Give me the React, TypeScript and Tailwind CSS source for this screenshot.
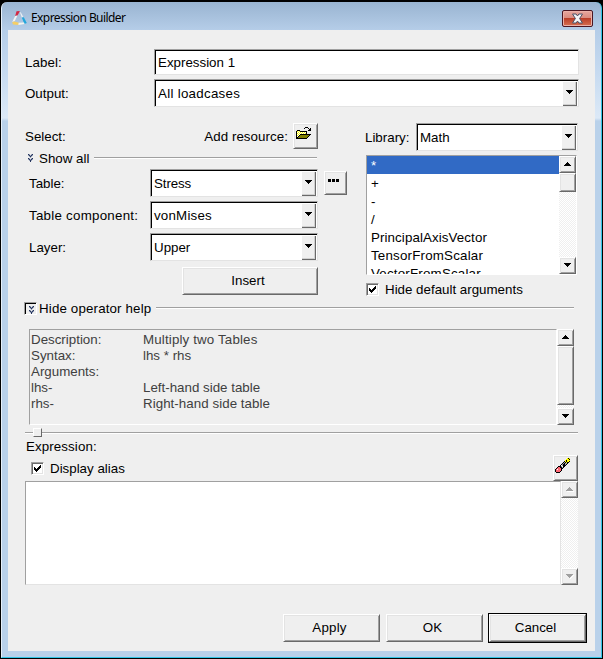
import React from 'react';
import clsx from 'clsx';

const RAISED =
  'bg-[#efefef] border border-t-white border-l-white border-b-[#696969] border-r-[#696969] shadow-[inset_1px_1px_0_#e3e3e3,inset_-1px_-1px_0_#a0a0a0]';
const SUNKEN =
  'bg-white border border-t-[#a0a0a0] border-l-[#a0a0a0] border-b-[#e3e3e3] border-r-[#e3e3e3] shadow-[inset_1px_1px_0_#000]';
const TRACK = 'bg-[repeating-conic-gradient(#fff_0_25%,#efefef_0_50%)] bg-[length:2px_2px]';

const COLORS: Record<string, string> = {
  K: '#000000',
  Y: '#ffff00',
  W: '#ffffff',
  O: '#808000',
  G: '#a0a0a0',
  P: '#ff6673',
  B: '#26355d',
  L: '#98a2b8',
};

const FOLDER = [
  '.........KKK...',
  '........K...K.K',
  '.............KK',
  '.KKK........KKK',
  'KYWYKKKKKKK....',
  'KWYWYWYWYWK....',
  'KYWYWYWYWYK....',
  'KWYWKKKKKKKKKKK',
  'KYWKOOOOOOOOOK.',
  'KWKOOOOOOOOOK..',
  'KKOOOOOOOOOK...',
  'KKKKKKKKKKK....',
];

const ERASER = [
  '............YKY',
  '...........YYYK',
  '..........YKYYY',
  '.........KYKYYK',
  '........KGKYKK.',
  '.......KGKGGK..',
  '......KGKKGK...',
  '.....KWGKKK....',
  '...KKKGWKK.....',
  '..KPPKKGK......',
  '.KPPPPKK.......',
  'KPWPPPK........',
  'KPPPPPK........',
  'KPPPPK.........',
  '.KKKK..........',
];

const CHEVRONS = ['BL.LB', 'LBLBL', '.LBL.', '..L..', 'BL.LB', 'LBLBL', '.LBL.', '..B..'];
const CHECK = ['......K', '.....KK', 'K...KKK', 'KK.KKK.', 'KKKKK..', '.KKK...', '..K....'];

const PixelIcon = ({ rows, className }: { rows: string[]; className?: string }) => {
  const w = rows[0].length;
  return (
    <svg width={w} height={rows.length} viewBox={`0 0 ${w} ${rows.length}`} shapeRendering="crispEdges" className={clsx('block shrink-0', className)}>
      {rows.flatMap((row, y) =>
        row.split('').map((c, x) => (COLORS[c] ? <rect key={`${x}-${y}`} x={x} y={y} width={1} height={1} fill={COLORS[c]} /> : null))
      )}
    </svg>
  );
};

const Arrow = ({ up, disabled }: { up?: boolean; disabled?: boolean }) => (
  <svg width="8" height="5" viewBox="0 0 8 5" shapeRendering="crispEdges" className="block">
    {disabled && <path d={up ? 'M1 5h7V4H1z' : 'M4 5h1V4h1V3h1V2h1V1H7v1H6v1H5v1H4z'} fill="#fff" />}
    <path d={up ? 'M3 0h1v1h1v1h1v1h1v1H0V3h1V2h1V1h1z' : 'M0 0h7v1H6v1H5v1H4v1H3V3H2V2H1V1H0z'} fill={disabled ? '#a0a0a0' : '#000'} />
  </svg>
);

const ScrollButton = ({ up, disabled }: { up?: boolean; disabled?: boolean }) => (
  <div className={clsx('w-[17px] h-[17px] shrink-0 flex items-center justify-center', RAISED)}>
    <Arrow up={up} disabled={disabled} />
  </div>
);

const Combo = ({ value, className, text }: { value: string; className?: string; text?: string }) => (
  <div className={clsx('h-7 flex p-px pl-[3px] shrink-0', SUNKEN, className)}>
    <span className={clsx('flex-1 leading-[25px]', text)}>{value}</span>
    <div className="w-[14px] h-6 mt-px bg-[#efefef] border-r border-b border-[#696969] shadow-[inset_-1px_-1px_0_#d0d0d0] flex justify-center pt-[8px] pl-px">
      <Arrow />
    </div>
  </div>
);

const Rule = ({ className }: { className?: string }) => <div className={clsx('h-[2px] bg-[#a0a0a0] border-b border-white', className)} />;

const Checkbox = () => (
  <div className="w-[13px] h-[13px] bg-white border border-t-[#a0a0a0] border-l-[#a0a0a0] border-b-white border-r-white shadow-[inset_1px_1px_0_#696969,inset_-1px_-1px_0_#e3e3e3] pt-[2px] pl-[2px] shrink-0">
    <PixelIcon rows={CHECK} />
  </div>
);

const Button = ({ children, className }: { children: React.ReactNode; className?: string }) => (
  <button className={clsx('h-7 block shrink-0', RAISED, className)}>{children}</button>
);

const operators = [
  { name: '*' },
  { name: '+' },
  { name: '-' },
  { name: '/' },
  { name: 'PrincipalAxisVector', text: 'tracking-[0.1px]' },
  { name: 'TensorFromScalar', text: 'tracking-[0.2px]' },
  { name: 'VectorFromScalar', text: 'tracking-[0.2px]' },
];

const help = [
  { label: 'Description:', value: 'Multiply two Tables', text: 'tracking-[0.15px]' },
  { label: 'Syntax:', value: 'lhs * rhs' },
  { label: 'Arguments:', value: '' },
  { label: 'lhs-', value: 'Left-hand side table' },
  { label: 'rhs-', value: 'Right-hand side table', text: 'tracking-[0.05px]' },
];

const fields = [
  { label: 'Table:', value: 'Stress', text: 'tracking-[-0.1px]' },
  { label: 'Table component:', value: 'vonMises', text: 'tracking-[0.2px]' },
  { label: 'Layer:', value: 'Upper' },
];

const TitleBar = () => (
  <div className="h-[28px] flex items-start pl-[10px] pr-[8px] shrink-0">
    <svg width="15" height="15" viewBox="0 0 15 15" className="mt-[9px] shrink-0">
      <path d="M4.5 0.3 L8 0 L5.5 4.5 L3.2 5 Z" fill="#d32742" />
      <path d="M3.2 5 L5.5 4.5 L2.8 10 L0.2 11 Z" fill="#f5f3f1" />
      <path d="M7.6 0.6 L9.2 2 L11.6 6.5 L9.8 6.5 Z" fill="#e9eef3" />
      <path d="M9.8 6.5 L11.8 6.2 L14.8 12 L12.4 13 Z" fill="#22a7dc" />
      <path d="M0.2 11 L2.6 10.4 L7 11.8 L6.6 14 L1 13.6 Z" fill="#f6cf66" />
      <path d="M6.6 11.8 L12 11.4 L12.6 13 L6.4 14 Z" fill="#f4f4ef" />
    </svg>
    <h1 className="ml-[4px] mt-[8px] text-[12px] leading-4 font-[Noto_Sans,sans-serif] tracking-[-0.58px] whitespace-nowrap">Expression Builder</h1>
    <button className="ml-auto mt-[8px] w-[31px] h-[17px] rounded-[2px] border border-[#4b1622] bg-linear-to-b from-[#e7a79f] from-0% via-[#d98a7e] via-48% to-[#d2684f] shadow-[inset_0_0_0_1px_#ebb1a8] flex items-center justify-center relative overflow-hidden">
      <span className="absolute left-px right-px bottom-px h-[7px] bg-linear-to-b from-[#b83a25] to-[#d3694c]" />
      <svg width="13" height="11" viewBox="0 0 13 11" className="relative">
        <path d="M1.5 1h3.6l1.4 2L7.9 1h3.6L8.6 5.5 11.5 10H7.9L6.5 8 5.1 10H1.5l2.9-4.5z" fill="#f4f4f6" stroke="#4d5267" strokeWidth="1" />
      </svg>
    </button>
  </div>
);

export default function App() {
  return (
    <div className="w-[603px] h-[659px] bg-black pt-[2px] pl-px pr-px pb-px overflow-hidden font-[Liberation_Sans,Arial,sans-serif] text-[13.33px] leading-4 text-black">
      <div className="w-[601px] h-[656px] rounded-t-[6px] border-l border-l-[#e6f0fa] border-r border-r-[#32c5e6] border-b border-b-[#32c5e6] bg-[linear-gradient(#99b4d1_0px,#b5cde8_28px,#c6daf0_70px,#dce9f7_116px,#b9d1ea_119px,#b9d1ea_100%)] flex flex-col px-[6px] pb-[6px]">
        <div className="-mx-[6px]">
          <TitleBar />
        </div>
        <main className="w-[587px] flex-1 bg-[#efefef] pl-[17px] pt-[19px] whitespace-nowrap">
          <div className="flex items-start">
            <span className="w-[129px] pt-[6px] tracking-[0.1px]">Label:</span>
            <div className={clsx('w-[425px] h-[26px] pl-[3px] leading-[25px]', SUNKEN)}>Expression 1</div>
          </div>
          <div className="flex items-start mt-1">
            <span className="w-[129px] pt-[7px]">Output:</span>
            <Combo value="All loadcases" className="w-[425px]" text="tracking-[0.28px]" />
          </div>

          <section className="flex mt-4 h-[178px]">
            {/* Table selection */}
            <div className="w-[341px]">
              <div className="flex items-start h-[26px]">
                <span className="pt-[6px]">Select:</span>
                <span className="ml-auto pt-[6px] tracking-[0.06px]">Add resource:</span>
                <button className={clsx('ml-[5px] mr-[48px] w-[25px] h-[26px] pl-[2px] pt-[3px] flex items-start', RAISED)}>
                  <PixelIcon rows={FOLDER} />
                </button>
              </div>
              <div className="flex items-center h-[18px]">
                <PixelIcon rows={CHEVRONS} className="ml-[3px] mr-[6px]" />
                <span className="relative top-px">Show all</span>
                <Rule className="w-[223px] ml-auto mr-[49px]" />
              </div>
              <div className="pl-[4px] pt-[2px] flex flex-col gap-1">
                {fields.map((f, i) => (
                  <div key={f.label} className="flex items-start">
                    <span className={clsx('w-[121px] pt-[7px]', i === 1 && 'tracking-[0.25px]')}>{f.label}</span>
                    <Combo value={f.value} className="w-[168px]" text={f.text} />
                    {i === 0 && (
                      <button className={clsx('ml-[6px] mt-[2px] w-[23px] h-6 flex gap-px pl-[3px] pt-[7px]', RAISED)}>
                        <span className="w-[3px] h-[3px] bg-black" />
                        <span className="w-[3px] h-[3px] bg-black" />
                        <span className="w-[3px] h-[3px] bg-black" />
                      </button>
                    )}
                  </div>
                ))}
              </div>
              <Button className="w-[136px] ml-[157px] mt-[6px] pr-1">Insert</Button>
            </div>

            {/* Operator library */}
            <div>
              <div className="flex items-start">
                <span className="w-[50px] pt-[7px] -ml-px mr-px">Library:</span>
                <Combo value="Math" className="w-[162px]" />
              </div>
              <div className="flex mt-1 w-[211px] h-[120px] bg-white border border-t-[#a0a0a0] border-l-[#a0a0a0] border-b-white border-r-white overflow-hidden">
                <ul className="flex-1 overflow-hidden">
                  {operators.map((op, i) => (
                    <li key={op.name} className={clsx('h-[18px] leading-[19px] pl-1', op.text, i === 0 && 'bg-[#316ac5] text-white')}>
                      {op.name}
                    </li>
                  ))}
                </ul>
                <div className={clsx('w-[17px] flex flex-col', TRACK)}>
                  <ScrollButton up />
                  <div className={clsx('w-[17px] h-[19px]', RAISED)} />
                  <div className="flex-1" />
                  <ScrollButton />
                </div>
              </div>
              <label className="flex items-start mt-2 h-4">
                <Checkbox />
                <span className="ml-[6px] -mt-px">Hide default arguments</span>
              </label>
            </div>
          </section>

          <div className="flex items-center h-[14px] -ml-px">
            <div className="w-[13px] h-[13px] border border-t-[#a0a0a0] border-l-[#a0a0a0] border-b-white border-r-white shadow-[inset_1px_1px_0_#000] pl-[4px] pt-[3px]">
              <PixelIcon rows={CHEVRONS} />
            </div>
            <span className="ml-[2px] pt-[2px] tracking-[0.15px]">Hide operator help</span>
            <Rule className="w-[418px] ml-auto mr-[21px]" />
          </div>
          <div className="flex mt-[14px] ml-1 h-24">
            <div className="w-[528px] border border-t-[#a0a0a0] border-l-[#a0a0a0] border-b-white border-r-white text-[#404040] pl-px pt-[2px]">
              {help.map((h) => (
                <div key={h.label} className="flex h-4">
                  <span className="w-28">{h.label}</span>
                  <span className={h.text}>{h.value}</span>
                </div>
              ))}
            </div>
            <div className={clsx('w-[17px] flex flex-col', TRACK)}>
              <ScrollButton up />
              <div className={clsx('w-[17px] h-[59px]', RAISED)} />
              <div className="flex-1" />
              <ScrollButton />
            </div>
          </div>

          {/* Splitter */}
          <div className="relative h-[9px] mt-[3px] pt-[4px]">
            <Rule className="w-[553px]" />
            <div className="absolute left-2 top-0 w-[9px] h-[9px] bg-[#efefef] border border-t-white border-l-white border-b-[#696969] border-r-[#696969]" />
          </div>

          <div className="h-[18px] pl-px pt-[2px] tracking-[0.1px]">Expression:</div>
          <div className="flex items-start h-[26px]">
            <label className="flex items-start pt-[7px] pl-[6px]">
              <Checkbox />
              <span className="ml-[6px] -mt-px">Display alias</span>
            </label>
            <button className={clsx('ml-auto mr-[17px] w-[25px] h-[26px] pl-px pt-[2px] flex items-start', RAISED)}>
              <PixelIcon rows={ERASER} />
            </button>
          </div>
          <div className="flex h-[104px]">
            <div className="w-[536px] bg-white border border-t-[#a0a0a0] border-l-[#a0a0a0] border-b-[#e3e3e3] border-r-[#e3e3e3]" />
            <div className={clsx('w-[17px] flex flex-col justify-between', TRACK)}>
              <ScrollButton up disabled />
              <ScrollButton disabled />
            </div>
          </div>

          <div className="flex items-center justify-end mt-7 mr-[8px] h-[30px]">
            <Button className="w-[97px] mr-[6px] pr-1 tracking-[0.2px]">Apply</Button>
            <Button className="w-[97px] mr-[5px] pr-1">OK</Button>
            <div className="border border-black">
              <Button className="w-[97px] pr-1">Cancel</Button>
            </div>
          </div>
        </main>
      </div>
    </div>
  );
}
